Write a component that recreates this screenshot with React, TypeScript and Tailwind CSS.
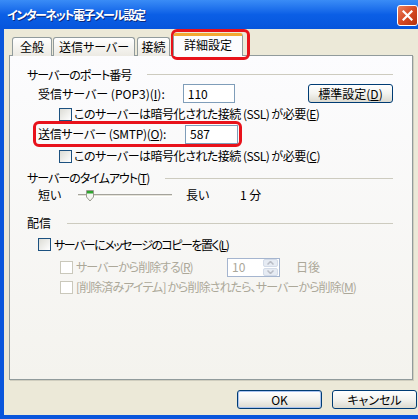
import type { ReactNode } from "react";

function Key({ children }: { children: ReactNode }) {
  return <span className="underline underline-offset-1">{children}</span>;
}

function Checkbox({ disabled = false }: { disabled?: boolean }) {
  return (
    <span
      className={
        disabled
          ? "inline-block w-[13px] h-[13px] shrink-0 border border-[#cac8bb] bg-white"
          : "inline-block w-[13px] h-[13px] shrink-0 border border-[#1c5180] bg-gradient-to-br from-[#dcdcd5] to-white"
      }
    />
  );
}

function Heading({ children, track }: { children: ReactNode; track: string }) {
  return (
    <div className="flex items-center h-full">
      <span className={"whitespace-nowrap " + track}>{children}</span>
      <span className="flex-1 h-px bg-[#cdcbbf] ml-[16px]" />
    </div>
  );
}

function TextBox({ value }: { value: string }) {
  return (
    <div className="w-[53px] h-[19px] border border-[#7f9db9] bg-white flex items-center pl-[4px]">
      {value}
    </div>
  );
}

function XpButton({ children, primary = false }: { children: ReactNode; primary?: boolean }) {
  return (
    <button
      className={
        "w-[85px] h-[19px] rounded-[3px] border border-[#003c74] bg-gradient-to-b from-white via-[#f3f3ef] to-[#dcdad0] flex items-center justify-center leading-none " +
        (primary ? "shadow-[inset_0_0_0_1px_#a9c3f0]" : "")
      }
    >
      {children}
    </button>
  );
}

function Tab({ label, w }: { label: string; w: string }) {
  return (
    <div
      className={
        "h-[19px] border border-b-0 border-[#919b9c] rounded-t-[3px] bg-gradient-to-b from-white to-[#eceae3] flex items-center justify-center " +
        w
      }
    >
      {label}
    </div>
  );
}

export default function App() {
  return (
    <div className="relative w-[418px] h-[419px] overflow-hidden bg-[#0a56dc] text-[12px] text-black leading-none [font-family:'Noto_Sans_CJK_JP','Noto_Sans',sans-serif] [font-feature-settings:'palt']">
      {/* title bar */}
      <div className="h-[29px] flex items-start bg-gradient-to-b from-[#3a8cf6] via-[#0b5fe6] to-[#0655dc]">
        <span className="mt-[9px] ml-[7px] font-bold text-white tracking-[-1.5px] [text-shadow:1px_1px_0_#0a2a80]">
          インターネット電子メール設定
        </span>
        <div className="ml-auto mt-[5px] w-[21px] h-[21px] rounded-[3px] border border-white bg-gradient-to-br from-[#e9805e] via-[#d64a24] to-[#b5300c] flex items-center justify-center">
          <svg width="11" height="11" viewBox="0 0 11 11">
            <path d="M1.5 1.5 L9.5 9.5 M9.5 1.5 L1.5 9.5" stroke="white" strokeWidth="2.2" strokeLinecap="square" />
          </svg>
        </div>
      </div>

      {/* body */}
      <div className="ml-[4px] h-[386px] bg-[#ece9d8] flex flex-col pl-[5px] pt-[4px]">
        {/* tabs */}
        <div className="relative z-10 flex items-end h-[23px] pl-[3px] gap-[1px]">
          <Tab label="全般" w="w-[40px]" />
          <Tab label="送信サーバー" w="w-[82px]" />
          <div className="ml-[1px]">
            <Tab label="接続" w="w-[33px]" />
          </div>
          <div className="ml-[2px] w-[70px] h-[23px] rounded-t-[3px] border border-b-0 border-[#919b9c] border-t-[3px] border-t-[#f3a832] bg-[#fcfcfe] flex items-center justify-center pb-[2px]">
            詳細設定
          </div>
        </div>

        {/* panel */}
        <div className="-mt-[1px] w-[404px] h-[325px] border border-[#919b9c] bg-gradient-to-b from-[#fcfcfe] to-[#f4f3ee] shadow-[1px_1px_0_#d0cebf] pl-[17px] pr-[19px] pt-[10px] flex flex-col">
          <div className="h-[17px]">
            <Heading track="tracking-[-1px]">サーバーのポート番号</Heading>
          </div>

          <div className="h-[21px] flex items-center pl-[11px]">
            <span className="w-[147px] whitespace-nowrap">
              受信サーバー (POP3)(<Key>I</Key>):
            </span>
            <TextBox value="110" />
            <div className="ml-[73px]">
              <XpButton>
                標準設定(<Key>D</Key>)
              </XpButton>
            </div>
          </div>

          <div className="h-[20px] flex items-center pl-[32px] gap-[2px]">
            <Checkbox />
            <span className="whitespace-nowrap tracking-[-0.5px]">
              このサーバーは暗号化された接続 (SSL) が必要(<Key>E</Key>)
            </span>
          </div>

          <div className="h-[20px] flex items-center pl-[11px]">
            <span className="w-[147px] whitespace-nowrap tracking-[-0.3px]">
              送信サーバー (SMTP)(<Key>O</Key>):
            </span>
            <TextBox value="587" />
          </div>

          <div className="h-[24px] flex items-center pl-[32px] gap-[2px]">
            <Checkbox />
            <span className="whitespace-nowrap tracking-[-0.5px]">
              このサーバーは暗号化された接続 (SSL) が必要(<Key>C</Key>)
            </span>
          </div>

          <div className="h-[20px]">
            <Heading track="tracking-[-1px]">
              サーバーのタイムアウト(<Key>T</Key>)
            </Heading>
          </div>

          <div className="h-[14px] flex items-center pl-[11px]">
            <span className="w-[40px]">短い</span>
            <div className="relative w-[94px] h-[3px] border-t border-[#a4a39c] border-b border-b-white bg-[#e6e4da]">
              <svg className="absolute left-[8px] -top-[5px]" width="8" height="12" viewBox="0 0 8 12">
                <path d="M0.5 0.5 H7.5 V7 L4 11 L0.5 7 Z" fill="#f6f6f2" stroke="#9a9a90" />
                <rect x="1" y="1" width="6" height="2.5" fill="#2fa52f" />
              </svg>
            </div>
            <span className="ml-[14px] w-[54px]">長い</span>
            <span>1 分</span>
          </div>

          <div className="h-[18px] mt-[12px]">
            <Heading track="">配信</Heading>
          </div>

          <div className="h-[25px] flex items-center pl-[11px] gap-[3px]">
            <Checkbox />
            <span className="whitespace-nowrap tracking-[-1.5px]">
              サーバーにメッセージのコピーを置く(<Key>L</Key>)
            </span>
          </div>

          <div className="h-[20px] flex items-center pl-[33px] text-[#aca899]">
            <div className="w-[167px] flex items-center gap-[3px]">
              <Checkbox disabled />
              <span className="whitespace-nowrap tracking-[-1px]">
                サーバーから削除する(<Key>R</Key>)
              </span>
            </div>
            <div className="w-[53px] h-[19px] border border-[#a5b5cf] bg-white flex items-center">
              <span className="flex-1 pl-[4px]">10</span>
              <div className="w-[16px] h-[17px] flex flex-col gap-px pr-px">
                <div className="flex-1 rounded-[2px] bg-[#e6ebf3] border border-[#d3dbe8] flex items-center justify-center">
                  <svg width="7" height="4" viewBox="0 0 7 4">
                    <path d="M0.5 3.5 L3.5 0.5 L6.5 3.5" fill="none" stroke="#b9bdc6" strokeWidth="1.5" />
                  </svg>
                </div>
                <div className="flex-1 rounded-[2px] bg-[#e6ebf3] border border-[#d3dbe8] flex items-center justify-center">
                  <svg width="7" height="4" viewBox="0 0 7 4">
                    <path d="M0.5 0.5 L3.5 3.5 L6.5 0.5" fill="none" stroke="#b9bdc6" strokeWidth="1.5" />
                  </svg>
                </div>
              </div>
            </div>
            <span className="ml-[16px]">日後</span>
          </div>

          <div className="h-[20px] flex items-center pl-[33px] gap-[3px] text-[#aca899]">
            <Checkbox disabled />
            <span className="whitespace-nowrap tracking-[-0.9px]">
              [削除済みアイテム] から削除されたら、サーバーから削除(<Key>M</Key>)
            </span>
          </div>
        </div>

        {/* dialog buttons */}
        <div className="mt-[10px] flex justify-end gap-[10px] pr-[1px]">
          <XpButton primary>OK</XpButton>
          <XpButton>キャンセル</XpButton>
        </div>
      </div>

      {/* highlight marks drawn over the screenshot */}
      <div className="absolute left-[171px] top-[29px] w-[79px] h-[31px] border-[3px] border-[#e8121b] rounded-[6px]" />
      <div className="absolute left-[33px] top-[121px] w-[209px] h-[26px] border-[3px] border-[#e8121b] rounded-[6px]" />
    </div>
  );
}
